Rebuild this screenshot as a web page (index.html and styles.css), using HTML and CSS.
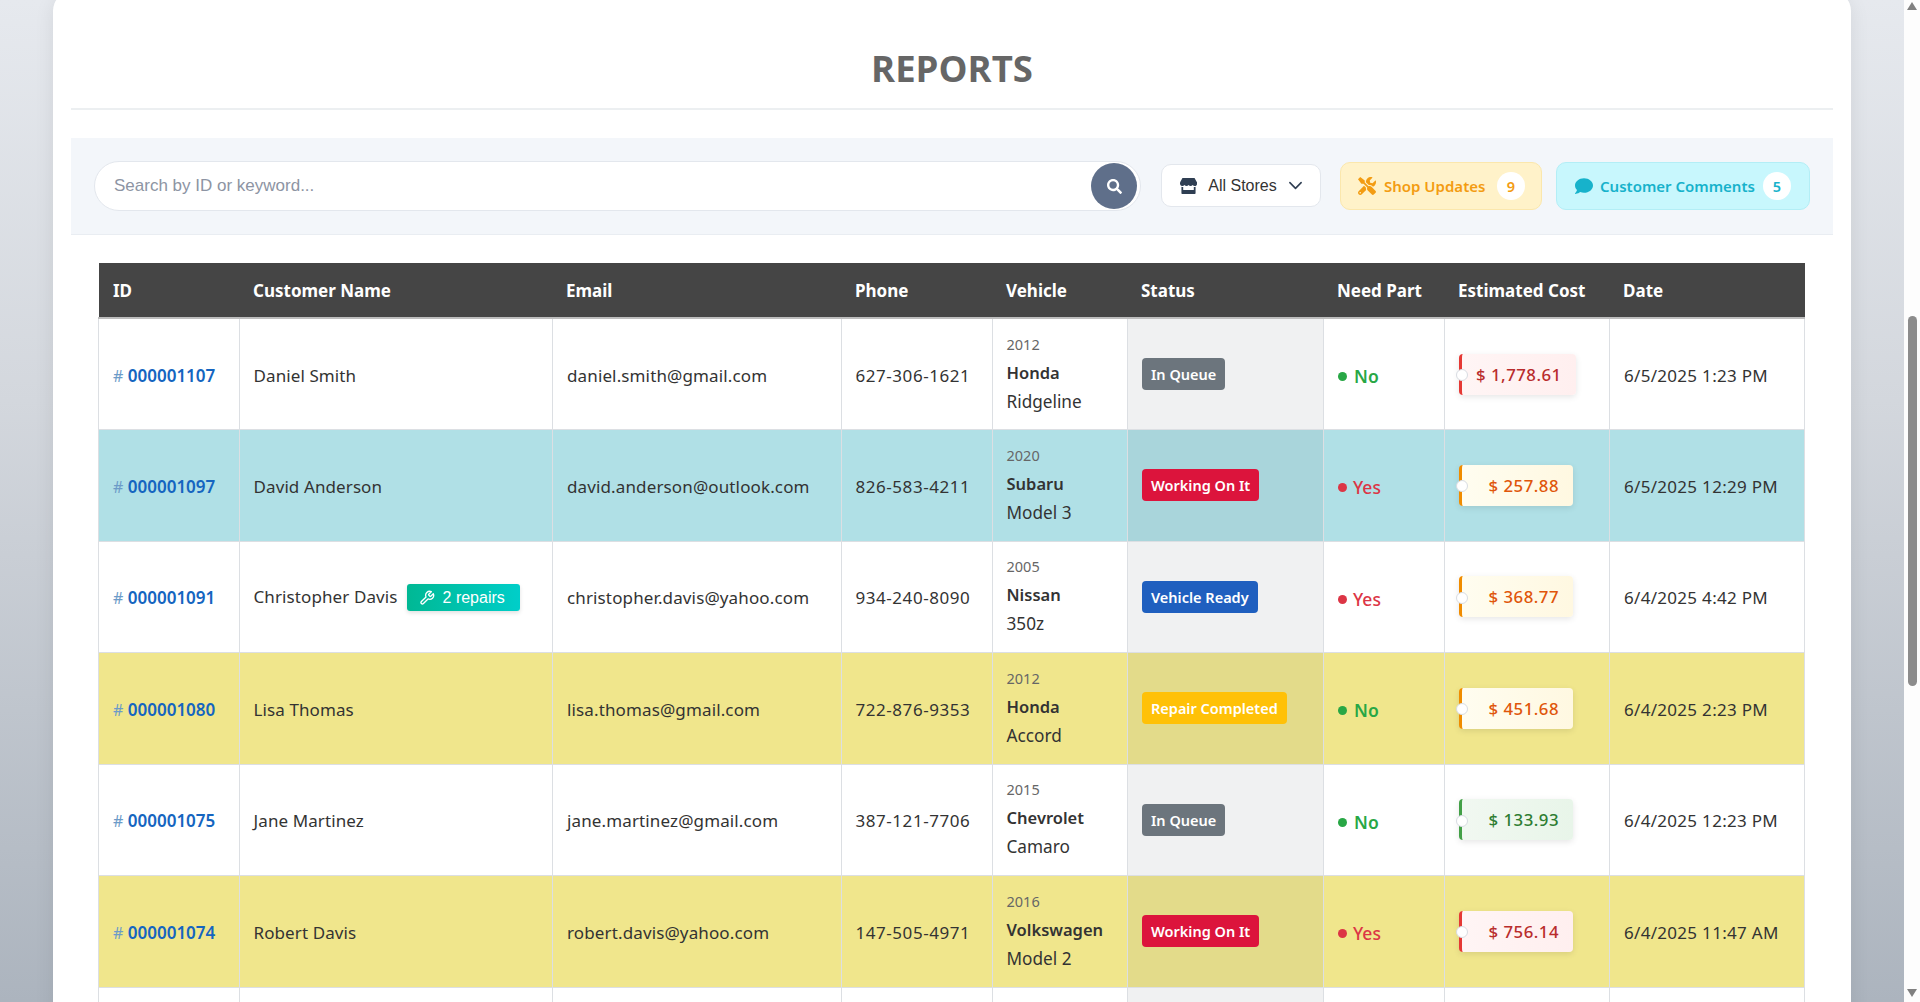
FILE: index.html
```html
<!DOCTYPE html>
<html lang="en">
<head>
<meta charset="utf-8">
<title>Reports</title>
<link rel="stylesheet" href="styles.css">
</head>
<body>
<div class="viewport">
  <main class="card">
    <h1 class="title">REPORTS</h1>
    <section class="toolbar">
      <div class="search">
        <span class="search-placeholder">Search by ID or keyword...</span>
        <button class="search-btn" type="button" aria-label="Search">
          <svg class="ico-search" viewBox="0 0 512 512"><path fill="currentColor" d="M505 442.700L405.300 343c-4.500-4.500-10.600-7-17-7H372c27.600-35.300 44-79.700 44-128C416 93.100 322.900 0 208 0S0 93.100 0 208s93.100 208 208 208c48.300 0 92.700-16.400 128-44v16.300c0 6.400 2.500 12.500 7 17l99.700 99.700c9.400 9.400 24.600 9.400 33.900 0l28.300-28.300c9.400-9.400 9.400-24.600.1-34zM208 336c-70.700 0-128-57.200-128-128 0-70.700 57.200-128 128-128 70.700 0 128 57.200 128 128 0 70.700-57.200 128-128 128z"/></svg>
        </button>
      </div>
      <button class="stores" type="button">
        <svg class="ico-store" viewBox="0 0 616 512" preserveAspectRatio="none"><path fill="currentColor" d="M602 118.600L537.100 15C531.300 5.700 521 0 510 0H106C95 0 84.700 5.700 78.900 15L14 118.600c-33.900 54.100-3.800 129.300 59.600 137.900 4.600.6 9.200.9 13.800.9 29.700 0 56.100-13 74.200-33.200 18.100 20.200 44.500 33.200 74.200 33.200s56.100-13 74.200-33.200c18.100 20.200 44.500 33.200 74.200 33.200s56.100-13 74.200-33.200c18.200 20.200 44.500 33.200 74.200 33.200 4.700 0 9.200-.3 13.800-.9 63.600-8.500 93.800-83.700 59.700-137.900zM529.500 288c-10 0-19.900-1.500-29.500-3.800V384H116v-99.800c-9.600 2.200-19.500 3.800-29.500 3.800-6 0-12.100-.4-18-1.200-5.600-.8-11.100-2.100-16.400-3.600V480c0 17.700 14.300 32 32 32h448c17.700 0 32-14.300 32-32V283.200c-5.400 1.600-10.800 2.900-16.400 3.600-6.100.8-12.100 1.200-18.200 1.200z"/></svg>
        <span>All Stores</span>
        <svg class="ico-chev" viewBox="0 0 16 16"><path fill="none" stroke="currentColor" stroke-width="1.700" stroke-linecap="round" stroke-linejoin="round" d="M2 5l6 6 6-6"/></svg>
      </button>
      <button class="pill pill-shop" type="button">
        <svg class="ico-tools" viewBox="0 0 512 512"><path fill="currentColor" d="M501.100 395.700L384 278.600c-23.100-23.100-57.600-27.600-85.400-13.900L192 158.100V96L64 0 0 64l96 128h62.100l106.600 106.600c-13.600 27.800-9.200 62.300 13.900 85.400l117.100 117.100c14.600 14.600 38.200 14.600 52.700 0l52.700-52.700c14.500-14.600 14.500-38.200 0-52.700zM331.700 225c28.300 0 54.900 11 74.900 31l19.400 19.400c15.800-6.900 30.800-16.500 43.800-29.500 37.100-37.100 49.700-89.300 37.900-136.700-2.200-9-13.500-12.100-20.100-5.500l-74.400 74.400-67.900-11.300L334 98.900l74.400-74.400c6.600-6.600 3.400-17.900-5.700-20.200-47.400-11.700-99.600.9-136.600 37.900-28.500 28.500-41.900 66.100-41.200 103.600l82.100 82.100c8.100-1.900 16.500-2.900 24.700-2.900zm-103.900 82l-56.700-56.700L18.700 402.800c-25 25-25 65.500 0 90.500s65.500 25 90.500 0l123.600-123.600c-7.600-19.900-9.900-41.600-5-62.700zM64 472c-13.200 0-24-10.800-24-24 0-13.300 10.700-24 24-24s24 10.700 24 24c0 13.200-10.700 24-24 24z"/></svg>
        <span>Shop Updates</span>
        <span class="count">9</span>
      </button>
      <button class="pill pill-cust" type="button">
        <svg class="ico-comment" viewBox="0 0 512 512"><path fill="currentColor" d="M256 32C114.600 32 0 125.100 0 240c0 49.600 21.400 95 57 130.700C44.500 421.100 2.700 466 2.200 466.500c-2.200 2.300-2.800 5.700-1.500 8.700S4.800 480 8 480c66.300 0 116-31.800 140.600-51.400 32.700 12.300 69 19.400 107.400 19.400 141.400 0 256-93.100 256-208S397.400 32 256 32z"/></svg>
        <span>Customer Comments</span>
        <span class="count">5</span>
      </button>
    </section>
    <section class="table-wrap">
      <table class="reports">
        <colgroup>
          <col class="c-id"><col class="c-name"><col class="c-email"><col class="c-phone"><col class="c-veh"><col class="c-status"><col class="c-part"><col class="c-cost"><col class="c-date">
        </colgroup>
        <thead>
          <tr><th>ID</th><th>Customer Name</th><th>Email</th><th>Phone</th><th>Vehicle</th><th>Status</th><th>Need Part</th><th>Estimated Cost</th><th>Date</th></tr>
        </thead>
        <tbody>
          <tr>
            <td class="id"><span class="hash">#</span> <a>000001107</a></td>
            <td class="name">Daniel Smith</td>
            <td class="email">daniel.smith@gmail.com</td>
            <td class="phone">627-306-1621</td>
            <td class="veh"><span class="yr">2012</span><b>Honda</b><span class="model">Ridgeline</span></td>
            <td class="status"><span class="badge b-queue">In Queue</span></td>
            <td class="part no"><i></i>No</td>
            <td class="cost"><span class="tag t-red">$ 1,778.61</span></td>
            <td class="date">6/5/2025 1:23 PM</td>
          </tr>
          <tr class="r-blue">
            <td class="id"><span class="hash">#</span> <a>000001097</a></td>
            <td class="name">David Anderson</td>
            <td class="email">david.anderson@outlook.com</td>
            <td class="phone">826-583-4211</td>
            <td class="veh"><span class="yr">2020</span><b>Subaru</b><span class="model">Model 3</span></td>
            <td class="status"><span class="badge b-work">Working On It</span></td>
            <td class="part yes"><i></i>Yes</td>
            <td class="cost"><span class="tag t-orange">$ 257.88</span></td>
            <td class="date">6/5/2025 12:29 PM</td>
          </tr>
          <tr>
            <td class="id"><span class="hash">#</span> <a>000001091</a></td>
            <td class="name has-badge"><span class="name-row">Christopher Davis<span class="repairs"><svg viewBox="0 0 24 24"><path fill="none" stroke="currentColor" stroke-width="2" stroke-linecap="round" stroke-linejoin="round" d="M14.700 6.300a1 1 0 0 0 0 1.400l1.600 1.600a1 1 0 0 0 1.400 0l3.770-3.770a6 6 0 0 1-7.940 7.940l-6.910 6.910a2.120 2.120 0 0 1-3-3l6.910-6.910a6 6 0 0 1 7.940-7.940l-3.760 3.760z"/></svg>2 repairs</span></span></td>
            <td class="email">christopher.davis@yahoo.com</td>
            <td class="phone">934-240-8090</td>
            <td class="veh"><span class="yr">2005</span><b>Nissan</b><span class="model">350z</span></td>
            <td class="status"><span class="badge b-ready">Vehicle Ready</span></td>
            <td class="part yes"><i></i>Yes</td>
            <td class="cost"><span class="tag t-orange">$ 368.77</span></td>
            <td class="date">6/4/2025 4:42 PM</td>
          </tr>
          <tr class="r-khaki">
            <td class="id"><span class="hash">#</span> <a>000001080</a></td>
            <td class="name">Lisa Thomas</td>
            <td class="email">lisa.thomas@gmail.com</td>
            <td class="phone">722-876-9353</td>
            <td class="veh"><span class="yr">2012</span><b>Honda</b><span class="model">Accord</span></td>
            <td class="status"><span class="badge b-done">Repair Completed</span></td>
            <td class="part no"><i></i>No</td>
            <td class="cost"><span class="tag t-orange">$ 451.68</span></td>
            <td class="date">6/4/2025 2:23 PM</td>
          </tr>
          <tr>
            <td class="id"><span class="hash">#</span> <a>000001075</a></td>
            <td class="name">Jane Martinez</td>
            <td class="email">jane.martinez@gmail.com</td>
            <td class="phone">387-121-7706</td>
            <td class="veh"><span class="yr">2015</span><b>Chevrolet</b><span class="model">Camaro</span></td>
            <td class="status"><span class="badge b-queue">In Queue</span></td>
            <td class="part no"><i></i>No</td>
            <td class="cost"><span class="tag t-green">$ 133.93</span></td>
            <td class="date">6/4/2025 12:23 PM</td>
          </tr>
          <tr class="r-khaki">
            <td class="id"><span class="hash">#</span> <a>000001074</a></td>
            <td class="name">Robert Davis</td>
            <td class="email">robert.davis@yahoo.com</td>
            <td class="phone">147-505-4971</td>
            <td class="veh"><span class="yr">2016</span><b>Volkswagen</b><span class="model">Model 2</span></td>
            <td class="status"><span class="badge b-work">Working On It</span></td>
            <td class="part yes"><i></i>Yes</td>
            <td class="cost"><span class="tag t-red">$ 756.14</span></td>
            <td class="date">6/4/2025 11:47 AM</td>
          </tr>
          <tr>
            <td></td><td></td><td></td><td></td><td></td><td class="status"></td><td></td><td></td><td></td>
          </tr>
        </tbody>
      </table>
    </section>
  </main>
  <aside class="scrollbar" aria-hidden="true">
    <span class="arrow up"></span>
    <div class="track"><span class="thumb"></span></div>
    <span class="arrow down"></span>
  </aside>
</div>
</body>
</html>
```
FILE: styles.css
```css
* { box-sizing: border-box; }
html, body { margin: 0; height: 100%; overflow: hidden; }
body { font-family: "Noto Sans", "Open Sans", sans-serif; color: #333; background: #fff; }

.viewport {
  height: 1002px;
  display: flex;
  overflow: hidden;
  background: linear-gradient(180deg, #e6e9ee 0%, #d3d7dd 40%, #acb4be 100%);
}

.card {
  flex: none;
  width: 1798px;
  height: 1100px;
  margin: -9px 0 0 53px;
  padding: 9px 18px 0;
  background: #fff;
  border-radius: 20px;
  box-shadow: 0 4px 20px rgba(0,0,0,.08);
}

.title {
  margin: 0;
  height: 110px;
  padding-top: 44px;
  border-bottom: 2px solid #eceff1;
  text-align: center;
  font-family: "Open Sans", sans-serif;
  font-size: 36.500px;
  line-height: 48px;
  font-weight: 700;
  color: #666;
}

.toolbar {
  margin-top: 28px;
  height: 97px;
  padding: 0 23px;
  display: flex;
  align-items: center;
  background: #f3f6fa;
  border-bottom: 1px solid #e9edf2;
}

.search {
  flex: none;
  width: 1047px;
  height: 50px;
  padding: 0 3px 0 19px;
  display: flex;
  align-items: center;
  justify-content: space-between;
  background: #fff;
  border: 1px solid #e3e7ed;
  border-radius: 25px;
}
.search-placeholder { font: 17px/20px "Liberation Sans", sans-serif; color: #8d94a3; }
.search-btn {
  width: 46px; height: 46px; padding: 0; border: 0;
  border-radius: 50%;
  background: #5f6f8a; color: #fff;
  display: flex; align-items: center; justify-content: center;
}
.ico-search { width: 15px; height: 15px; }

.stores {
  flex: none;
  width: 160px; height: 43px;
  margin: 0 0 1px 20px;
  padding: 0 17px 0 18px;
  display: flex; align-items: center; justify-content: space-between;
  background: #fff;
  border: 1px solid #e3e7ed;
  border-radius: 10px;
  font: 16px/20px "Liberation Sans", sans-serif;
  color: #333;
}
.ico-store { width: 17px; height: 16px; color: #2f3e52; }
.ico-chev { width: 15px; height: 15px; color: #2f3e52; }

.pill {
  flex: none;
  height: 48px;
  display: flex; align-items: center;
  border-radius: 10px;
  font-family: "Noto Sans", sans-serif;
  font-size: 15px;
  font-weight: 600;
}
.pill-shop {
  width: 202px;
  margin-left: 19px;
  padding: 0 16px 0 17px;
  background: #fff2c9;
  border: 1px solid #fbe7ac;
  color: #f39c12;
}
.pill-cust {
  width: 254px;
  margin-left: 14px;
  padding: 0 18px;
  background: #c8f7fd;
  border: 1px solid #b3eef6;
  color: #17b2cb;
}
.ico-tools { width: 18px; height: 18px; margin-right: 8px; }
.ico-comment { width: 18px; height: 18px; margin-right: 7px; }
.count {
  width: 28px; height: 28px;
  margin-left: auto;
  display: flex; align-items: center; justify-content: center;
  background: #fff;
  border-radius: 50%;
  font-size: 14.500px;
}

.table-wrap { margin: 28px 28px 0 27px; }
.reports { width: 1706px; border-collapse: collapse; table-layout: fixed; font-size: 17px; color: #333; }
.c-id { width: 141px; } .c-name { width: 313px; } .c-email { width: 289px; }
.c-phone { width: 151px; } .c-veh { width: 135px; } .c-status { width: 196px; }
.c-part { width: 121px; } .c-cost { width: 165px; } .c-date { width: 195px; }

.reports th {
  height: 55px;
  padding: 0 13.500px;
  background: #454545;
  color: #fff;
  text-align: left;
  font-size: 17px;
  font-weight: 700;
  border-bottom: 2px solid #bdbdbd;
}
.reports th:first-child { padding-left: 14.500px; }
.reports td {
  height: 111.500px;
  padding: 2px 14px 0;
  border: 1px solid #dcdfe3;
  vertical-align: middle;
  white-space: nowrap;
}
.reports tbody tr:last-child td { height: 60px; }
.reports td.name { padding-left: 13.500px; letter-spacing: .1px; }
.reports td.email { letter-spacing: .13px; }
.reports td.phone { padding-left: 13.500px; letter-spacing: .55px; }
.reports td.date { letter-spacing: .3px; }
.reports td.veh { padding: 0 14px 2px 13.500px; }
.reports td.status { padding: 0 14px 0 13.500px; }
.reports td.cost, .reports td.has-badge { padding-top: 0; }
.reports td.part { padding-top: 4px; }

.r-blue td { background: #b0e0e6; }
.r-khaki td { background: #f0e68c; }
.reports td.status { background-color: #f0f1f2; }
.r-blue td.status { background-color: #a9d5db; }
.r-khaki td.status { background-color: #e3db8a; }

.id { font-size: 17px; }
.id a { color: #1565c0; font-weight: 600; }
.hash { color: #6c9bc8; font-weight: 400; font-size: 16px; }

.name-row { display: flex; align-items: center; }
.repairs {
  display: inline-flex; align-items: center;
  height: 27px;
  margin: 2px 0 0 9px;
  padding: 0 15px 0 12px;
  border-radius: 3px;
  background: linear-gradient(90deg, #00b894, #00cec9);
  box-shadow: 0 2px 4px rgba(0,0,0,.12);
  color: #fff;
  font: 16px/20px "Liberation Sans", sans-serif;
  letter-spacing: 0;
}
.repairs svg { width: 16px; height: 16px; margin-right: 8px; }

.veh span, .veh b { display: block; }
.veh b { font-size: 16.500px; line-height: 29px; font-weight: 600; }
.veh .yr { font-size: 14.500px; line-height: 28px; color: #666; }
.veh .model { font-size: 17.200px; line-height: 30px; }

.badge {
  display: inline-block;
  height: 32px;
  padding: 0 9px 0 9.500px;
  border-radius: 4px;
  color: #fff;
  font-size: 14.500px;
  line-height: 32px;
  font-weight: 600;
}
.b-queue { background: #6c757d; }
.b-work { background: #dc143c; }
.b-ready { background: #1f5fbf; }
.b-done { background: #ffc107; }

.part { font-size: 17.500px; font-weight: 600; }
.part i { display: inline-block; width: 9px; height: 9px; margin-right: 7px; border-radius: 50%; vertical-align: 2px; }
.no { color: #28a745; } .no i { background: #28a745; }
.yes { color: #dc3545; font-weight: 500; } .yes i { background: #dc3545; margin-right: 6px; }

.tag {
  position: relative;
  display: inline-block;
  min-width: 114px;
  height: 41px;
  padding: 0 14px 0 14px;
  border-left: 3px solid;
  border-radius: 4px;
  text-align: right;
  font-size: 16.800px;
  line-height: 41px;
  font-weight: 500;
  letter-spacing: .5px;
  box-shadow: 0 2px 6px rgba(0,0,0,.1);
}
.tag::before {
  content: "";
  position: absolute;
  left: -6px; top: 50%;
  width: 10px; height: 10px;
  margin-top: -5px;
  border-radius: 50%;
  background: #fff;
  border: 1px solid #d8dce2;
}
.t-red { color: #b92c2c; border-color: #e53935; background: linear-gradient(90deg, #fff5f5, #ffefef); }
.t-orange { color: #e0560a; border-color: #f08c00; background: linear-gradient(90deg, #fffdf0, #fff8e1); }
.t-green { color: #2e7d32; border-color: #43a047; background: linear-gradient(90deg, #f1f8f1, #e8f5e9); }

.scrollbar {
  flex: none;
  width: 16px;
  margin-left: 53px;
  display: flex; flex-direction: column; align-items: center;
  background: #fdfdfd;
}
.arrow { flex: none; width: 0; height: 0; border-left: 5.500px solid transparent; border-right: 5.500px solid transparent; }
.up { margin-top: 2px; border-bottom: 8px solid #808080; }
.down { margin-bottom: 5px; border-top: 8px solid #808080; }
.track { flex: 1; width: 100%; padding-top: 306px; display: flex; justify-content: center; }
.thumb { width: 9px; height: 370px; border-radius: 5px; background: #8c8c8c; }
```
